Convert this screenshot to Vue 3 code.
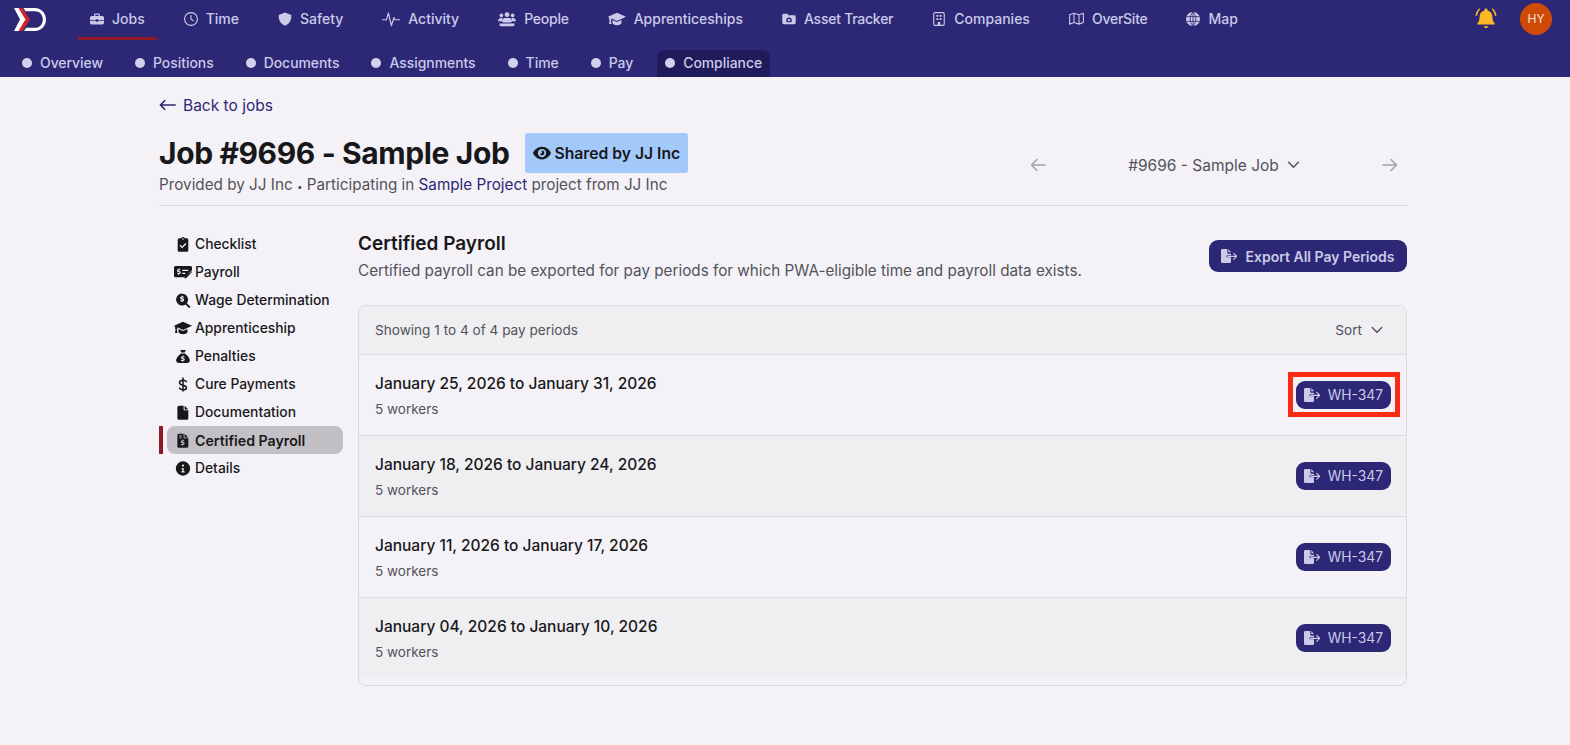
<template>
  <div class="page">
    <header class="topbar">
      <div class="mainrow">
        <svg class="logo" viewBox="0 0 32 23">
          <path d="M0 0h5.500L12 11.500 5.500 23H0l6-11.500z" fill="#fff" />
          <path d="M4.500 0h4L16 11.500 8.500 23h-4l7-11.500z" fill="#d3222e" />
          <path d="M9.500 0H21c6 0 11 5 11 11.500S27 23 21 23H10l2.200-3.200H21c4.500 0 7.800-3.500 7.800-8.300S25.500 3.200 21 3.200H11.500z" fill="#fff" />
        </svg>
        <nav class="mainnav">
          <a v-for="item in mainNav" :key="item.label" class="mainlink" :class="{ active: item.active, tight: item.tight }">
            <svg viewBox="0 0 24 24" :style="{ width: item.w + 'px', height: item.w + 'px' }" v-html="icons[item.icon]"></svg>
            {{ item.label }}
          </a>
        </nav>
        <svg class="bell" viewBox="0 0 24 24">
          <path d="M12 1.500c1 0 1.700.7 1.700 1.700v.7c3.500.8 5.300 3.700 5.300 7.200 0 3.300.9 5 2.500 6.900.4.500 0 1.200-.6 1.200H3.100c-.6 0-1-.7-.6-1.200C4.100 16 5 14.300 5 11.100c0-3.500 1.800-6.400 5.300-7.200v-.7c0-1 .7-1.700 1.700-1.700zM9.700 21h4.600c0 1.200-1 2-2.300 2s-2.300-.8-2.300-2z" fill="#fdb825" />
          <path d="M4.700 2.500C3 4.200 1.900 6.400 1.500 9M19.300 2.500c1.700 1.700 2.800 3.900 3.200 6.500" fill="none" stroke="#fdb825" stroke-width="1.700" stroke-linecap="round" />
        </svg>
        <div class="avatar">HY</div>
      </div>
      <nav class="subnav">
        <a v-for="item in subNav" :key="item" class="sublink" :class="{ active: item === 'Compliance' }">
          <span class="dot"></span>{{ item }}
        </a>
      </nav>
    </header>

    <main class="content">
      <a class="back">
        <svg viewBox="0 0 18 12"><path d="M17 6H1.500M6 1.500 1.500 6 6 10.500" fill="none" stroke="currentColor" stroke-width="1.800" stroke-linecap="round" stroke-linejoin="round" /></svg>
        Back to jobs
      </a>

      <section class="jobhead">
        <div>
          <div class="titleline">
            <h1>Job #9696 - Sample Job</h1>
            <span class="shared">
              <svg viewBox="0 0 24 24" v-html="icons.eye"></svg>
              Shared by JJ Inc
            </span>
          </div>
          <p class="provided">Provided by JJ Inc <span class="sep">•</span> Participating in <a>Sample Project</a> project from JJ Inc</p>
        </div>
        <div class="jobswitch">
          <svg class="arrow" viewBox="0 0 16 14"><path d="M15 7H1.500M7 1.500 1.500 7 7 12.500" /></svg>
          <span class="jobname">#9696 - Sample Job
            <svg class="chev" viewBox="0 0 14 9"><path d="M1.500 1.500 7 7l5.500-5.500" /></svg>
          </span>
          <svg class="arrow" viewBox="0 0 16 14"><path d="M1 7h13.500M9 1.500 14.500 7 9 12.500" /></svg>
        </div>
      </section>

      <div class="columns">
        <aside class="sidebar">
          <a v-for="item in sideNav" :key="item.label" class="sidelink" :class="{ active: item.active }">
            <svg viewBox="0 0 24 24" :style="{ height: item.h + 'px' }" v-html="icons[item.icon]"></svg>
            <span>{{ item.label }}</span>
          </a>
        </aside>

        <section class="panel">
          <div class="panelhead">
            <div>
              <h2>Certified Payroll</h2>
              <p>Certified payroll can be exported for pay periods for which PWA-eligible time and payroll data exists.</p>
            </div>
            <button class="btn exportall">
              <svg viewBox="0 0 24 21" v-html="icons.fileExport"></svg>
              Export All Pay Periods
            </button>
          </div>

          <div class="card">
            <div class="cardtop">
              <span>Showing 1 to 4 of 4 pay periods</span>
              <span class="sort">Sort
                <svg class="chev small" viewBox="0 0 14 9"><path d="M1.500 1.500 7 7l5.500-5.500" /></svg>
              </span>
            </div>
            <div v-for="(period, i) in periods" :key="period" class="row">
              <div class="period">
                <div class="range">{{ period }}</div>
                <div class="workers">5 workers</div>
              </div>
              <button class="btn wh">
                <svg viewBox="0 0 24 21" v-html="icons.fileExport"></svg>
                WH-347
                <span v-if="i === 0" class="marker"></span>
              </button>
            </div>
          </div>
        </section>
      </div>
    </main>
  </div>
</template>

<script setup>
const icons = {
  briefcase: '<path fill="currentColor" d="M9 2.500h6a2 2 0 0 1 2 2V7h4a3 3 0 0 1 3 3v3.500H14v-1h-4v1H0V10a3 3 0 0 1 3-3h4V4.500a2 2 0 0 1 2-2zm0 2V7h6V4.500zM0 15h10v1.500h4V15h10v3.500a3 3 0 0 1-3 3H3a3 3 0 0 1-3-3z"/>',
  clock: '<circle cx="12" cy="12" r="11" fill="none" stroke="currentColor" stroke-width="1.900"/><path d="M12 6v6.500l4 2.500" fill="none" stroke="currentColor" stroke-width="1.900" stroke-linecap="round"/>',
  shield: '<path fill="currentColor" d="M12 1 22.800 5c.3 7.500-1.800 14.500-10.800 18.500C3 19.500.9 12.500 1.200 5z"/>',
  pulse: '<path d="M0 13h6l2.500-9 4 17 3.500-11 1.500 3H24" fill="none" stroke="currentColor" stroke-width="1.500" stroke-linejoin="round" stroke-linecap="round"/>',
  people: '<path fill="currentColor" d="M12 3a3.200 3.200 0 1 1 0 6.400A3.200 3.200 0 0 1 12 3zM4.500 4.500a2.500 2.500 0 1 1 0 5 2.500 2.500 0 0 1 0-5zm15 0a2.500 2.500 0 1 1 0 5 2.500 2.500 0 0 1 0-5zM0 15c0-2.500 1.800-4.300 4-4.300h2.300C5.500 12 5.300 13.500 5.600 15zm24 0h-5.600c.3-1.500.1-3-.7-4.300H20c2.200 0 4 1.800 4 4.300zM9 10.800h6c2 0 3.500 2 3.500 4.200 0 1-.5 1.500-1.500 1.500H7c-1 0-1.500-.5-1.500-1.500 0-2.200 1.500-4.200 3.500-4.200zM2 18h20v1.500a2 2 0 0 1-2 2H4a2 2 0 0 1-2-2z"/>',
  cap: '<path fill="currentColor" d="M12 3.500 24 9l-12 5.500L4.500 11v2l-.7 1 .9 4.500H1.300l.9-4.500-.7-1v-2.700L0 9zM6 13.300l6 2.700 6-2.700V17c0 1.700-2.700 3.200-6 3.200S6 18.700 6 17z"/>',
  folderCam: '<path fill="currentColor" fill-rule="evenodd" d="M3 3h6l2.500 2.500H21a2.500 2.500 0 0 1 2.500 2.500v10.500A2.500 2.500 0 0 1 21 21H3a2.500 2.500 0 0 1-2.500-2.500V5.500A2.500 2.500 0 0 1 3 3zm7 6.500L9 11H7.500v6.500h9V11H15l-1-1.500zm2 2.500a2 2 0 1 1 0 4 2 2 0 0 1 0-4z"/>',
  building: '<rect x="3" y="1" width="18" height="22" rx="2.500" fill="none" stroke="currentColor" stroke-width="1.900"/><path fill="currentColor" d="M7.500 5h3.500v3H7.500zM13 5h3.500v3H13zM7.500 10.500h3.500v3H7.500zm5.500 0h3.500v3H13zM10 17h4v6h-4z"/>',
  map: '<path d="M8 3.500 1 6v15l7-2.500 8 2.500 7-2.500V3.500L16 6zM8 3.500v15M16 6v15" fill="none" stroke="currentColor" stroke-width="1.700" stroke-linejoin="round"/>',
  globe: '<circle cx="12" cy="12" r="12" fill="currentColor"/><path d="M1 8h22M1 16h22M12 0c-6.500 6.500-6.500 17.500 0 24M12 0c6.500 6.500 6.500 17.500 0 24M12 0v24" fill="none" stroke="#2d2876" stroke-width="1.400"/>',
  eye: '<path fill="currentColor" fill-rule="evenodd" d="M12 3.500c6 0 10.500 4.500 12 8.500-1.500 4-6 8.500-12 8.500S1.500 16 0 12c1.500-4 6-8.500 12-8.500zm0 3a5.500 5.500 0 1 0 0 11 5.500 5.500 0 0 0 0-11zm0 2.300a3.200 3.200 0 1 1-3.100 4 2 2 0 0 0 2.700-2.800c-.3-.5.100-1.200.4-1.200z"/>',
  fileExport: '<path fill="currentColor" d="M2 0h7.500v5.500A1.500 1.500 0 0 0 11 7h4v2.500H9.500a1.500 1.500 0 0 0 0 3H15V19a2 2 0 0 1-2 2H2a2 2 0 0 1-2-2V2a2 2 0 0 1 2-2zm9 0 4 5h-4z"/><path d="M10 11h13M19 6.500l4.500 4.500-4.500 4.500" fill="none" stroke="currentColor" stroke-width="1.700" stroke-linejoin="round" stroke-linecap="round"/>',
  clipCheck: '<path fill="currentColor" fill-rule="evenodd" d="M12 0a3 3 0 0 1 2.800 2H18a2.500 2.500 0 0 1 2.500 2.500V21a2.500 2.500 0 0 1-2.500 2.500H6A2.500 2.500 0 0 1 3.500 21V4.500A2.500 2.500 0 0 1 6 2h3.200A3 3 0 0 1 12 0zm5.500 11-1.500-1.500-5.500 5.500L8 12.500 6.500 14l4 4zM12 2a1.200 1.200 0 1 0 0 2.400A1.200 1.200 0 0 0 12 2z"/>',
  moneyPen: '<path fill="currentColor" fill-rule="evenodd" d="M2 4h20a2 2 0 0 1 2 2v3.500L14.500 19H2a2 2 0 0 1-2-2V6a2 2 0 0 1 2-2zm4.500 3v1C5 8.200 4 9 4 10.200c0 1.300 1 1.800 2.300 2.100.9.200 1.200.4 1.200.7 0 .4-.5.600-1.800.3l-1-.3-.4 1.400 1.300.3V16h1.300v-1.200C8.500 14.600 9 13.800 9 12.800c0-1.300-1-1.800-2.300-2.200-.9-.2-1.200-.4-1.200-.6 0-.4.600-.6 1.800-.3l.8.2.4-1.400-1-.3V7zM11 9v1.500h8V9zm0 4v1.500h4V13z"/><path fill="currentColor" d="M24 11v1l-7.500 8-2.500.5.500-2.500z"/>',
  searchDollar: '<path fill="currentColor" fill-rule="evenodd" d="M10.500 1a9.500 9.500 0 0 1 7.600 15.200l5 5a1.500 1.500 0 0 1-2.200 2.100l-5-5A9.500 9.500 0 1 1 10.500 1zM9.800 4.500v1.100C8.300 5.900 7.400 6.800 7.400 8c0 1.400 1.100 2 2.500 2.400 1.100.3 1.400.5 1.400.9 0 .5-.7.700-1.900.4L8 11.300l-.5 1.500 2.300.6v1.100h1.500v-1.100c1.500-.3 2.500-1.200 2.500-2.400 0-1.500-1.100-2.100-2.500-2.500-1.100-.3-1.400-.5-1.400-.8 0-.5.700-.7 1.900-.4l1.200.3.500-1.500-1.700-.5V4.500z"/>',
  moneyBag: '<path fill="currentColor" fill-rule="evenodd" d="M7.500 1.500h9l-2 4h-5zM9 7h6c4 2.500 8 7.500 8 11.500 0 2.500-2 4-4.500 4h-13C3 22.500 1 21 1 18.500 1 14.500 5 9.500 9 7zm2.300 3.500v1.100c-1.500.3-2.400 1.200-2.400 2.400 0 1.400 1.100 2 2.500 2.400 1.100.3 1.400.5 1.400.9 0 .5-.7.700-1.900.4l-1.900-.5-.5 1.500 2.300.6v1.100h1.500v-1.100c1.500-.3 2.500-1.200 2.500-2.400 0-1.500-1.100-2.100-2.500-2.500-1.100-.3-1.400-.5-1.400-.8 0-.5.700-.7 1.900-.4l1.200.3.500-1.500-1.700-.5v-1z"/>',
  dollar: '<path fill="none" stroke="currentColor" stroke-width="2.400" stroke-linecap="round" d="M17.500 7.500C16.500 5.500 14 5 12 5 9 5 6.500 6.500 6.500 9c0 5.500 11 3 11 8 0 2.500-2.500 3.500-5.500 3.500-2.200 0-4.600-.7-5.700-2.700M12 1.500v21"/>',
  file: '<path fill="currentColor" d="M5.500 1H13v6a1.500 1.500 0 0 0 1.500 1.500h6V21a2.500 2.500 0 0 1-2.500 2.500H5.500A2.500 2.500 0 0 1 3 21V3.500A2.500 2.500 0 0 1 5.500 1zm9 0 6 6h-6z"/>',
  fileDollar: '<path fill="currentColor" fill-rule="evenodd" d="M5.500 1H13v6a1.500 1.500 0 0 0 1.500 1.500h6V21a2.500 2.500 0 0 1-2.500 2.500H5.500A2.500 2.500 0 0 1 3 21V3.500A2.500 2.500 0 0 1 5.500 1zM11 10.500v1.100c-1.500.3-2.400 1.200-2.400 2.400 0 1.400 1.100 2 2.500 2.400 1.100.3 1.400.5 1.400.9 0 .5-.7.700-1.900.4l-1.900-.5-.5 1.500 2.300.6v1.100H12v-1.100c1.500-.3 2.500-1.200 2.500-2.400 0-1.500-1.100-2.100-2.500-2.500-1.100-.3-1.400-.5-1.400-.8 0-.5.700-.7 1.900-.4l1.200.3.500-1.500-1.700-.5v-1zM14.500 1l6 6h-6zM6 4h4v1.500H6zm0 3h4v1.500H6z"/>',
  info: '<path fill="currentColor" fill-rule="evenodd" d="M12 .5a11.500 11.500 0 1 1 0 23 11.500 11.500 0 0 1 0-23zm0 5a1.800 1.800 0 1 0 0 3.600 1.800 1.800 0 0 0 0-3.600zm-2.200 5.500v2h1.200v3.500H9.500v2h5v-2h-1.500V11z"/>'
}

const mainNav = [
  { label: 'Jobs', icon: 'briefcase', w: 14, active: true },
  { label: 'Time', icon: 'clock', w: 14 },
  { label: 'Safety', icon: 'shield', w: 14 },
  { label: 'Activity', icon: 'pulse', w: 18 },
  { label: 'People', icon: 'people', w: 18, tight: true },
  { label: 'Apprenticeships', icon: 'cap', w: 18 },
  { label: 'Asset Tracker', icon: 'folderCam', w: 14, tight: true },
  { label: 'Companies', icon: 'building', w: 14 },
  { label: 'OverSite', icon: 'map', w: 15, tight: true },
  { label: 'Map', icon: 'globe', w: 14 }
]

const subNav = ['Overview', 'Positions', 'Documents', 'Assignments', 'Time', 'Pay', 'Compliance']

const sideNav = [
  { label: 'Checklist', icon: 'clipCheck', h: 15 },
  { label: 'Payroll', icon: 'moneyPen', h: 18 },
  { label: 'Wage Determination', icon: 'searchDollar', h: 15 },
  { label: 'Apprenticeship', icon: 'cap', h: 18 },
  { label: 'Penalties', icon: 'moneyBag', h: 15 },
  { label: 'Cure Payments', icon: 'dollar', h: 15 },
  { label: 'Documentation', icon: 'file', h: 15 },
  { label: 'Certified Payroll', icon: 'fileDollar', h: 15, active: true },
  { label: 'Details', icon: 'info', h: 15 }
]

const periods = [
  'January 25, 2026 to January 31, 2026',
  'January 18, 2026 to January 24, 2026',
  'January 11, 2026 to January 17, 2026',
  'January 04, 2026 to January 10, 2026'
]
</script>

<style>
body {
  background: #f4f2f6;
}
</style>

<style scoped>
.page {
  min-height: 745px;
  background: #f4f2f6;
  color: #18181b;
  font-family: Inter, "Liberation Sans", sans-serif;
}

.topbar {
  height: 77px;
  background: #2d2876;
  color: #cbcae9;
  font-size: 14px;
  font-weight: 500;
}

.mainrow {
  display: flex;
  align-items: flex-start;
  height: 40px;
  padding-left: 14px;
}

.logo {
  width: 32px;
  height: 23px;
  margin-top: 8px;
}

.mainnav {
  display: flex;
  gap: 15px;
  margin-left: 32px;
  flex: 1;
}

.mainlink {
  display: flex;
  align-items: center;
  gap: 8px;
  height: 40px;
  padding: 0 12px 3px;
  box-sizing: border-box;
}

.mainlink.active {
  border-bottom: 3px solid #8e1b24;
  padding-bottom: 0;
}

.mainlink.tight {
  letter-spacing: -0.25px;
}

.bell {
  width: 22px;
  height: 22px;
  margin: 7px 23px 0 0;
}

.avatar {
  width: 32px;
  height: 32px;
  margin: 3px 18px 0 0;
  border-radius: 50%;
  background: #cf4a05;
  color: #f6e6dc;
  font-size: 12px;
  font-weight: 400;
  line-height: 32px;
  text-align: center;
}

.subnav {
  display: flex;
  gap: 16px;
  height: 27px;
  margin-top: 10px;
  padding-left: 14px;
  font-size: 13.900px;
}

.sublink {
  display: flex;
  align-items: center;
  gap: 8px;
  padding: 0 8px 2px;
  border-radius: 8px 8px 0 0;
}

.sublink.active {
  background: #201c5c;
}

.dot {
  width: 10px;
  height: 10px;
  border-radius: 50%;
  background: #d3d2ec;
}

.content {
  width: 1248px;
  margin-left: 159px;
  padding-top: 18px;
}

.back {
  display: flex;
  align-items: center;
  gap: 7px;
  height: 20px;
  color: #2d2876;
  font-size: 15.500px;
}

.back svg {
  width: 17px;
  height: 12px;
}

.jobhead {
  display: flex;
  justify-content: space-between;
  margin-top: 18px;
  height: 72px;
  border-bottom: 1px solid #d9d8dd;
}

.titleline {
  display: flex;
  align-items: center;
  gap: 15px;
  height: 40px;
}

h1 {
  margin: 0;
  font-size: 30px;
  font-weight: 700;
  line-height: 40px;
  letter-spacing: -0.38px;
}

.shared {
  display: flex;
  align-items: center;
  gap: 4px;
  height: 40px;
  padding: 0 8px;
  border-radius: 3px;
  background: #a3c9fb;
  font-size: 15.700px;
  font-weight: 600;
}

.shared svg {
  width: 18px;
  height: 18px;
}

.provided {
  margin: 1px 0 0;
  color: #52525b;
  font-size: 15.250px;
  line-height: 22px;
}

.provided a {
  color: #2d2876;
}

.sep {
  font-size: 10px;
}

.jobswitch {
  display: flex;
  align-items: center;
  justify-content: space-between;
  width: 368px;
  height: 24px;
  margin: 20px 9px 0 0;
  color: #52525b;
  font-size: 15.500px;
}

.jobname {
  display: flex;
  align-items: center;
  gap: 8px;
}

.arrow {
  width: 16px;
  height: 14px;
  fill: none;
  stroke: #a1a1aa;
  stroke-width: 1.500;
  stroke-linecap: round;
  stroke-linejoin: round;
}

.chev {
  width: 13px;
  height: 8px;
  fill: none;
  stroke: currentColor;
  stroke-width: 1.700;
  stroke-linecap: round;
  stroke-linejoin: round;
}

.chev.small {
  width: 12px;
}

.columns {
  display: flex;
  margin-top: 24px;
}

.sidebar {
  display: flex;
  flex-direction: column;
  width: 184px;
  margin-right: 15px;
  flex: none;
}

.sidelink {
  position: relative;
  display: flex;
  align-items: center;
  gap: 3px;
  height: 28px;
  margin-left: 8px;
  padding-left: 7px;
  border-radius: 8px;
  font-size: 13.850px;
  font-weight: 500;
}

.sidelink svg {
  width: 18px;
  flex: none;
}

.sidelink.active {
  background: #c2c0c4;
  font-size: 14.200px;
  font-weight: 600;
}

.sidelink.active::before {
  content: "";
  position: absolute;
  left: -8px;
  top: 0;
  width: 4px;
  height: 28px;
  background: #8e1b24;
}

.panel {
  width: 1049px;
}

.panelhead {
  display: flex;
  justify-content: space-between;
  align-items: flex-start;
  height: 56px;
}

h2 {
  margin: 1px 0 0;
  font-size: 19px;
  font-weight: 600;
  line-height: 26px;
}

.panelhead p {
  margin: 3px 0 0;
  color: #52525b;
  font-size: 15.250px;
  line-height: 22px;
}

.btn {
  display: flex;
  align-items: center;
  border: none;
  border-radius: 9px;
  background: #2d2876;
  color: #cbcae9;
  font-family: inherit;
  font-size: 14px;
}

.btn svg {
  width: 16px;
  height: 14px;
  flex: none;
}

.exportall {
  gap: 8px;
  height: 32px;
  padding: 0 12.500px;
  font-weight: 600;
  margin-top: 10px;
}

.card {
  margin-top: 19px;
  height: 381px;
  box-sizing: border-box;
  border: 1px solid #dadadf;
  border-radius: 8px;
  overflow: hidden;
}

.cardtop {
  display: flex;
  justify-content: space-between;
  align-items: center;
  height: 48px;
  padding: 0 23px 0 16px;
  border-bottom: 1px solid #dadadf;
  background: #efeef1;
  color: #52525b;
  font-size: 13.600px;
  box-sizing: content-box;
}

.sort {
  display: flex;
  align-items: center;
  gap: 9px;
}

.row {
  display: flex;
  justify-content: space-between;
  align-items: center;
  box-sizing: border-box;
  height: 81px;
  padding: 0 15px 0 16px;
  border-bottom: 1px solid #dadadf;
}

.row:nth-of-type(odd) {
  background: #efeef1;
}

.row:last-child {
  border-bottom: none;
  height: 80px;
}

.period {
  padding-bottom: 2px;
}

.range {
  margin-top: 2px;
  font-size: 15.500px;
  font-weight: 500;
  line-height: 22px;
}

.workers {
  margin-top: 5px;
  color: #52525b;
  font-size: 13.500px;
  line-height: 18px;
}

.wh {
  position: relative;
  gap: 8px;
  height: 28px;
  padding: 0 8px;
  font-size: 13.800px;
}

.marker {
  position: absolute;
  inset: -9px -9px -8px -8px;
  border: 5px solid #fb2a10;
  pointer-events: none;
}
</style>
